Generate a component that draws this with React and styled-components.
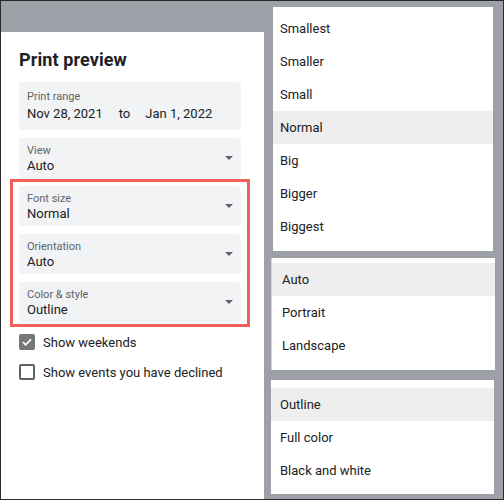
import React from "react";
import styled, { createGlobalStyle } from "styled-components";

const GlobalStyle = createGlobalStyle`
  html, body {
    margin: 0;
    padding: 0;
  }
  body {
    font-family: Roboto, "Liberation Sans", Arial, sans-serif;
    -webkit-font-smoothing: antialiased;
  }
`;

const Frame = styled.div`
  display: flex;
  align-items: flex-start;
  width: 504px;
  height: 500px;
  box-sizing: border-box;
  border: 1px solid #2a2a2a;
  background-color: #9da1a7;
  overflow: hidden;
`;

const LeftPanel = styled.div`
  flex: none;
  width: 263px;
  height: 470px;
  margin-top: 31px;
  box-sizing: border-box;
  padding: 16px 23px 0 18px;
  background-color: #fff;
`;

const Title = styled.div`
  font-size: 18px;
  line-height: 24px;
  font-weight: 700;
  color: #202124;
  letter-spacing: 0.1px;
`;

const Fields = styled.div`
  display: flex;
  flex-direction: column;
  gap: 8px;
  margin-top: 10px;
`;

const Field = styled.div`
  display: flex;
  align-items: center;
  height: ${(p) => (p.$tall ? "48px" : "40px")};
  box-sizing: border-box;
  padding: 0 8px;
  border-radius: 4px;
  background-color: #f1f3f4;
`;

const FieldText = styled.div`
  flex: 1;
  display: flex;
  flex-direction: column;
  align-self: flex-start;
  padding-top: ${(p) => (p.$tall ? "8px" : "6px")};
`;

const Label = styled.div`
  font-size: 11px;
  line-height: 14px;
  color: #5f6368;
`;

const Value = styled.div`
  display: flex;
  font-size: 13px;
  line-height: ${(p) => (p.$tall ? "20px" : "15px")};
  color: #202124;
`;

const To = styled.span`
  margin: 0 15px 0 16px;
`;

const Arrow = styled.svg`
  flex: none;
  width: 8px;
  height: 4px;
`;

const Highlight = styled.div`
  display: flex;
  flex-direction: column;
  gap: 8px;
  margin: -7px -9px -5px;
  padding: 4px 6px 2px;
  border: 3px solid #f0605a;
`;

const Checks = styled.div`
  display: flex;
  flex-direction: column;
  margin-top: -3px;
`;

const CheckRow = styled.div`
  display: flex;
  align-items: center;
  gap: 8px;
  height: 30px;
  font-size: 13px;
  color: #202124;
`;

const Box = styled.div`
  flex: none;
  display: flex;
  align-items: center;
  justify-content: center;
  width: 16px;
  height: 16px;
  box-sizing: border-box;
  border-radius: 2px;
  border: 2px solid ${(p) => (p.$checked ? "#777777" : "#5f6368")};
  background-color: ${(p) => (p.$checked ? "#777777" : "#fff")};
`;

const RightColumn = styled.div`
  display: flex;
  flex-direction: column;
  align-items: flex-start;
  margin-left: 7px;
  padding-top: 6px;
`;

const Menu = styled.div`
  width: ${(p) => p.$width}px;
  margin-left: ${(p) => p.$offset || 0}px;
  margin-top: ${(p) => p.$gap || 0}px;
  padding: ${(p) => p.$padTop}px 0 ${(p) => p.$padBottom}px;
  box-sizing: border-box;
  background-color: #fff;
  border-left: ${(p) => (p.$edge ? "1px solid #d6d6d6" : "none")};
`;

const Item = styled.div`
  height: 33px;
  display: flex;
  align-items: center;
  padding-left: ${(p) => p.$indent}px;
  font-size: 13px;
  color: #202124;
  background-color: ${(p) => (p.$active ? "#eeeeee" : "transparent")};
`;

const DropArrow = () => (
  <Arrow viewBox="0 0 10 5">
    <path d="M0 0l5 5 5-5z" fill="#5f6368" />
  </Arrow>
);

const SelectField = ({ label, value }) => (
  <Field>
    <FieldText>
      <Label>{label}</Label>
      <Value>{value}</Value>
    </FieldText>
    <DropArrow />
  </Field>
);

const menus = [
  {
    width: 220,
    offset: 2,
    gap: 0,
    padTop: 5,
    padBottom: 8,
    indent: 7,
    active: "Normal",
    items: ["Smallest", "Smaller", "Small", "Normal", "Big", "Bigger", "Biggest"],
  },
  {
    width: 224,
    offset: 0,
    gap: 7,
    padTop: 5,
    padBottom: 8,
    indent: 10,
    edge: true,
    active: "Auto",
    items: ["Auto", "Portrait", "Landscape"],
  },
  {
    width: 223,
    offset: 0,
    gap: 10,
    padTop: 8,
    padBottom: 7,
    indent: 9,
    active: "Outline",
    items: ["Outline", "Full color", "Black and white"],
  },
];

export default function App() {
  return (
    <>
      <GlobalStyle />
      <Frame>
        <LeftPanel>
          <Title>Print preview</Title>
          <Fields>
            <Field $tall>
              <FieldText $tall>
                <Label>Print range</Label>
                <Value $tall>
                  <span>Nov 28, 2021</span>
                  <To>to</To>
                  <span>Jan 1, 2022</span>
                </Value>
              </FieldText>
            </Field>
            <SelectField label="View" value="Auto" />
            <Highlight>
              <SelectField label="Font size" value="Normal" />
              <SelectField label="Orientation" value="Auto" />
              <SelectField label="Color &amp; style" value="Outline" />
            </Highlight>
            <Checks>
              <CheckRow>
                <Box $checked>
                  <svg width="12" height="12" viewBox="0 0 12 12">
                    <path d="M2 6.2l2.6 2.6L10 3.4" fill="none" stroke="#fff" strokeWidth="1.8" />
                  </svg>
                </Box>
                Show weekends
              </CheckRow>
              <CheckRow>
                <Box />
                Show events you have declined
              </CheckRow>
            </Checks>
          </Fields>
        </LeftPanel>
        <RightColumn>
          {menus.map((m) => (
            <Menu
              key={m.active}
              $width={m.width}
              $offset={m.offset}
              $gap={m.gap}
              $padTop={m.padTop}
              $padBottom={m.padBottom}
              $edge={m.edge}
            >
              {m.items.map((it) => (
                <Item key={it} $indent={m.indent} $active={it === m.active}>
                  {it}
                </Item>
              ))}
            </Menu>
          ))}
        </RightColumn>
      </Frame>
    </>
  );
}
